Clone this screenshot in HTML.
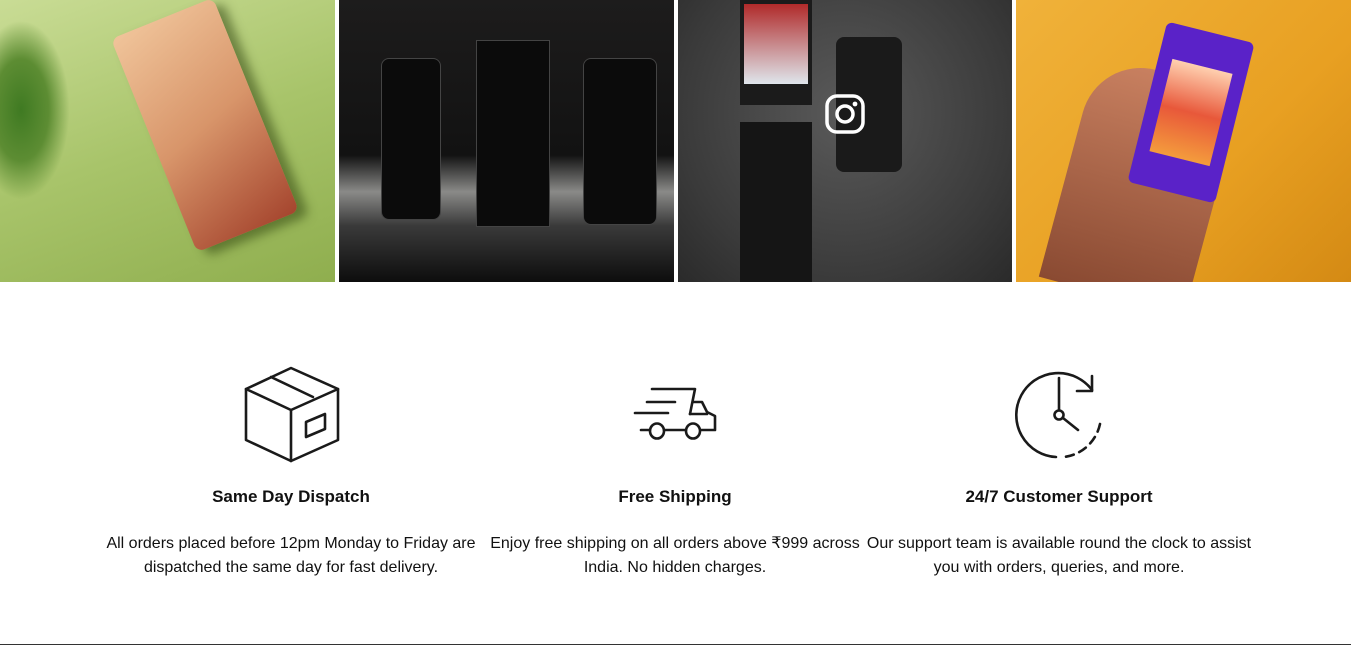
<!DOCTYPE html>
<html><head><meta charset="utf-8"><style>
body{margin:0;width:1351px;height:645px;background:#fff;overflow:hidden;font-family:"Liberation Sans",sans-serif;position:relative}
.t{position:absolute;top:0;height:282px;overflow:hidden}
.col{position:absolute;top:0;width:384px;text-align:center;color:#111}
.col h3{position:absolute;top:487px;left:0;right:0;margin:0;font-size:17px;font-weight:bold;color:#111}
.col p{position:absolute;top:532px;left:-10px;right:-10px;margin:0;font-size:16px;line-height:24px;color:#111}
svg{position:absolute}
</style></head><body>
<div class="t" style="left:0;width:335px;background:linear-gradient(160deg,#c9dc95 0%,#a8c46a 50%,#8fae4e 100%)">
 <div style="position:absolute;left:0;top:20px;width:70px;height:180px;background:radial-gradient(ellipse at 30% 50%,#3f7a22 0%,#5d8d33 40%,transparent 70%)"></div>
 <div style="position:absolute;left:150px;top:10px;width:110px;height:230px;background:linear-gradient(160deg,#f0c49a,#d8956a 50%,#a5452e);transform:rotate(-22deg);border-radius:8px;box-shadow:8px 8px 10px rgba(40,60,10,.5)"></div>
</div>
<div class="t" style="left:339px;width:335px;background:linear-gradient(180deg,#1d1c1c 0%,#121212 55%,#8a8a88 68%,#3a3a3a 80%,#0d0d0d 100%)">
 <div style="position:absolute;left:42px;top:58px;width:58px;height:160px;background:#0b0b0b;border-radius:8px;border:1px solid #444"></div>
 <div style="position:absolute;left:137px;top:40px;width:72px;height:185px;background:#0b0b0b;border:1px solid #444"></div>
 <div style="position:absolute;left:244px;top:58px;width:72px;height:165px;background:#0b0b0b;border-radius:8px;border:1px solid #444"></div>
</div>
<div class="t" style="left:678px;width:334px;background:radial-gradient(ellipse at 50% 40%,#5a5a5a,#3a3a3a 70%,#2a2a2a)">
 <div style="position:absolute;left:62px;top:0;width:72px;height:105px;background:#1b1b1b"><div style="margin:4px;height:80px;background:linear-gradient(#b02a2a,#dfe6ec)"></div></div>
 <div style="position:absolute;left:62px;top:122px;width:72px;height:160px;background:#151515"></div>
 <div style="position:absolute;left:158px;top:37px;width:66px;height:135px;background:#1a1a1a;border-radius:8px"></div>
 <svg style="left:147px;top:94px" width="40" height="40" viewBox="0 0 40 40"><rect x="2" y="2" width="36" height="36" rx="10" fill="none" stroke="#fff" stroke-width="3.5"/><circle cx="20" cy="20" r="8" fill="none" stroke="#fff" stroke-width="3.5"/><circle cx="30" cy="10" r="2.4" fill="#fff"/></svg>
</div>
<div class="t" style="left:1016px;width:335px;background:linear-gradient(135deg,#f0b23a,#e8a022 60%,#d48a14)">
 <div style="position:absolute;left:50px;top:70px;width:150px;height:230px;background:linear-gradient(#c88060,#8a4a32);border-radius:60px 60px 0 0;transform:rotate(15deg)"></div>
 <div style="position:absolute;left:130px;top:30px;width:90px;height:165px;background:#5a22c8;transform:rotate(14deg);border-radius:6px"><div style="margin:35px 14px;height:95px;background:linear-gradient(#ffd0b0,#e8583a,#f49c3c)"></div></div>
</div>

<svg style="left:0;top:0" width="1351" height="645" viewBox="0 0 1351 645" fill="none" stroke="#1a1a1a" stroke-width="2.6" stroke-linejoin="round" stroke-linecap="round">
 <path d="M291 368L246 389L291 410L338 389Z"/>
 <path d="M246 389V440L291 461V410"/>
 <path d="M338 389V440L291 461"/>
 <path d="M271 377L313 397"/>
 <path d="M306 422L325 414V429L306 437Z"/>

 <path d="M652 389H695L690 414"/>
 <path d="M693 402H702L707 412L715 416V430H701"/>
 <path d="M690 414H707"/>
 <path d="M647 402H675"/>
 <path d="M635 413H668"/>
 <path d="M641 430H650M664 430H686"/>
 <ellipse cx="657" cy="431" rx="7" ry="7.5"/>
 <ellipse cx="693" cy="431" rx="7" ry="7.5"/>

 <path d="M1056 457A42 42 0 1 1 1092 390"/>
 <path d="M1092 376V391H1077"/>
 <path d="M1100 424A42 42 0 0 1 1064 457" stroke-dasharray="8 6"/>
 <path d="M1059 378V410"/>
 <circle cx="1059" cy="415" r="4.5"/>
 <path d="M1063 418L1078 430"/>
</svg>

<div class="col" style="left:99px">
 <h3>Same Day Dispatch</h3>
 <p>All orders placed before 12pm Monday to Friday are<br>dispatched the same day for fast delivery.</p>
</div>
<div class="col" style="left:483px">
 <h3>Free Shipping</h3>
 <p>Enjoy free shipping on all orders above ₹999 across<br>India. No hidden charges.</p>
</div>
<div class="col" style="left:867px">
 <h3>24/7 Customer Support</h3>
 <p>Our support team is available round the clock to assist<br>you with orders, queries, and more.</p>
</div>
<div style="position:absolute;left:0;top:644px;width:1351px;height:1px;background:#333"></div>
</body></html>
